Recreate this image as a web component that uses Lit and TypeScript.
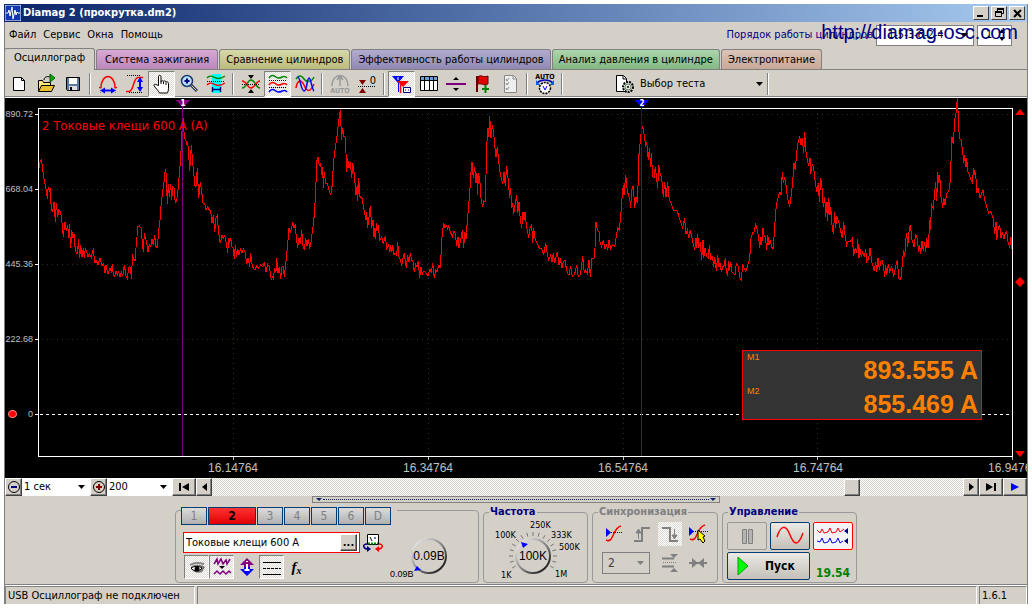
import { LitElement, html, svg, css } from "lit";
import { customElement, state } from "lit/decorators.js";
import { classMap } from "lit/directives/class-map.js";

// Current trace, x and y in thirds of a plot unit.
const TRACE = `117,218 120,200 124,196 127,212 130,240 133,255 136,270 139,285 142,312 145,275 148,290 151,278 154,345 158,350 162,322 166,380 169,325 173,365 176,345 182,352 186,385 190,425 195,380 199,408 203,390 206,428 208,388 212,460 215,405 219,430 222,418 226,465 229,475 233,475 235,432 239,488 242,450 246,485 250,460 253,488 256,460 260,470 264,485 268,475 274,488 280,460 284,505 288,495 294,510 300,488 306,512 311,506 315,535 318,510 324,538 330,520 334,528 337,508 340,540 344,545 348,528 352,540 356,530 360,545 364,530 368,542 373,510 378,542 382,550 387,515 390,515 395,552 397,478 400,490 405,498 408,458 411,425 413,395 418,392 423,400 427,440 430,470 433,415 437,432 440,445 444,470 448,450 452,455 456,432 460,450 464,420 468,455 472,458 476,405 480,375 484,320 488,290 492,260 496,222 499,240 502,328 505,268 508,305 512,268 515,315 518,275 522,280 526,325 530,315 534,285 538,240 542,185 545,130 548,60 551,90 553,130 557,133 560,150 563,140 566,180 569,228 574,150 578,205 581,230 584,270 588,275 592,220 596,310 601,262 605,290 609,325 614,325 618,345 623,335 628,345 632,348 636,385 640,360 644,412 648,370 652,362 656,415 661,445 666,420 670,430 674,422 680,450 683,475 686,428 689,440 692,430 696,455 700,460 703,492 706,450 710,485 713,462 717,480 722,462 726,475 730,462 735,470 740,508 744,490 749,515 752,475 756,508 760,520 765,525 770,512 775,520 782,510 788,515 793,500 798,530 803,508 808,515 814,555 817,545 820,550 824,520 828,530 830,488 834,535 838,515 842,552 846,515 850,515 853,545 858,498 862,460 867,400 871,412 875,398 878,380 882,400 886,388 889,430 893,458 897,430 901,448 905,405 909,452 913,465 917,430 921,452 925,432 929,462 933,440 937,410 941,380 944,340 947,290 950,200 954,185 958,212 962,205 965,240 968,215 970,280 973,230 977,265 982,265 987,285 991,298 995,290 998,240 1002,190 1006,160 1010,130 1015,90 1020,50
|2,48 4,135 8,98 12,125 15,125 18,175 20,230 23,190 27,220 31,200 35,250 38,205 42,230 45,265 48,300 52,270 53,318 56,250 60,305 66,310 72,345 78,375 80,350 83,400 87,365 91,332 95,400 99,375 102,425 105,400 107,432 109,385 112,405 115,390 119,435 125,425 130,448 136,422 140,460 146,450 150,470 152,450 156,470 158,450 162,480 166,475 170,480 173,442 177,485 181,495 185,512 189,490 193,475 196,500 199,520 203,480 207,500 211,475 215,495 219,500 223,532 227,508 231,515 235,497 239,550 243,515 247,540 250,528 256,532 264,542 270,522 274,535 278,505 283,550 287,525 291,530 297,510 301,520 304,465 307,412 311,385 315,400 319,392 323,402 326,392 331,410 337,425 342,408 346,415 350,452 354,425 357,460 362,435 367,405 371,460 374,410 378,432 382,380 386,330 389,295 392,240 396,202 400,250 404,215 408,265 411,235 412,300 416,235 420,265 424,320 428,335 431,318 436,320 438,240 440,150 444,100 446,125 449,62 453,130 457,90 461,115 465,160 468,185 472,155 476,200 480,230 484,250 488,268 492,232 496,272 500,212 504,250 509,310 512,280 515,340 518,325 521,358 526,325 530,300 533,355 537,322 541,375 545,400 549,350 552,375 555,350 559,390 566,428 570,400 575,390 578,445 581,400 586,435 592,445 598,460 605,462 611,478 617,445 621,472 626,495 632,480 636,500 640,475 644,505 648,485 652,470 657,510 661,490 666,520 670,500 675,495 679,520 683,535 687,540 692,512 697,545 702,540 706,530 710,510 715,545 721,540 725,510 728,482 733,535 737,525 742,535 747,495 751,545 756,490 762,490 765,458 768,382 772,405 777,412 780,440 785,455 790,435 795,462 800,450 803,465 807,435 812,460 818,450 824,455 829,425 833,400 838,405 842,365 846,310 850,270 852,300 857,240 861,280 865,300 869,310 872,338 875,285 880,272 884,340 888,305 892,325 895,250 898,150 902,145 904,90 908,95 914,130 917,155 920,140 925,195 928,160 932,215 934,175 938,245 942,248 946,215 950,250 953,280 956,210 960,235 965,250 970,305 974,260 978,305 983,262 988,315 994,325 1000,345 1005,345 1012,348 1018,370
|2,380 8,398 14,370 17,418 22,405 26,430 31,405 36,430 44,465 48,430 50,460 53,418 56,455 61,445 65,495 69,435 71,490 75,458 80,485 85,490 88,450 92,495 97,482 101,515 104,485 109,527 113,480 117,515 120,505 124,532 128,515 132,512 136,490 139,530 143,542 146,497 149,525 152,500 156,530 160,535 165,540 169,505 175,515 180,550 184,555 188,508 192,520 197,530 202,515 209,490 213,430 218,412 222,412 227,385 232,405 236,430 239,458 243,425 245,450 249,400 253,425 256,425 260,465 263,420 267,450 271,435 275,458 280,460 284,395 287,350 291,320 296,300 300,290 303,300 307,230 310,265 314,245 318,270 322,305 325,320 329,335 334,300 338,260 342,205 346,225 350,170 354,145 359,122 363,150 367,128 371,175 374,112 378,170 382,195 386,212 390,188 392,238 397,208 401,220 405,255 410,292 415,265 418,320 422,248 426,280 430,335 434,305 437,365 441,320 443,378 446,310 450,360 452,335 456,390 460,418 464,352 467,398 470,362 476,380 482,408 487,430 491,380 495,420 500,450 505,440 510,440 517,430 521,482 526,458 530,475 533,432 537,490 539,455 544,485 548,470 553,485 557,462 560,500 566,490 570,460 575,500 583,527 587,500 590,530 594,490 598,525 602,500 606,495 610,510 614,545 617,510 620,540 625,508 629,530 635,515 641,545 646,520 652,495 656,550 660,555 664,545 668,490 671,465 674,485 678,430 680,415 683,455 687,410 691,390 696,435 702,455 707,418 711,430 716,470 719,450 722,478 726,438 730,468 734,440 737,470 740,430 745,460 749,375 751,405 755,330 760,340 764,290 767,262 770,318 773,230 776,265 779,240 783,305 788,338 791,308 795,330 800,295 806,290 810,265 813,200 816,125 820,148 824,75 828,55 832,10 835,65 838,130 843,135 848,170 851,205 854,180 858,215 860,190 864,230 868,240 873,255 877,262 881,220 885,240 887,230 890,295 894,280 900,310 905,295 909,285 914,315 920,335 926,355 933,350 940,370 944,418 948,380 950,435 955,400 959,390 963,430 967,410 972,432 976,415 980,410 984,440 989,458 993,425 995,462`;

const POINTS = TRACE.split("|")
  .map((part, i) =>
    part
      .trim()
      .split(/\s+/)
      .map((pair) => {
        const [x, y] = pair.split(",").map(Number);
        return `${((x + i * 1020) / 3 - 38).toFixed(1)},${(y / 3 - 3).toFixed(1)}`;
      })
      .join(" ")
  )
  .join(" ");

const Y_LABELS = ["890.72", "668.04", "445.36", "222.68", "0"];
const X_LABELS = ["16.14764", "16.34764", "16.54764", "16.74764", "16.94764"];
const MENU = ["Файл", "Сервис", "Окна", "Помощь"];
const CHANNELS = ["1", "2", "3", "4", "5", "6", "D"];
const TABS = [
  { text: "Осциллограф", kind: "scope" },
  { text: "Система зажигания", kind: "ignition" },
  { text: "Сравнение цилиндров", kind: "compare" },
  { text: "Эффективность работы цилиндров", kind: "power" },
  { text: "Анализ давления в цилиндре", kind: "pressure" },
  { text: "Электропитание", kind: "supply" },
];

const icon = (body: unknown, w = 22, h = 22) =>
  html`<svg class="ico" width=${w} height=${h} viewBox="0 0 ${w} ${h}" aria-hidden="true">${body}</svg>`;

const ICONS: Record<string, unknown> = {
  new: icon(svg`<path d="M5.500 4.500h8l3 3v10h-11z" fill="#fff" stroke="#000"/><path d="M13.500 4.500v3h3" fill="none" stroke="#000"/>`),
  open: icon(svg`<path d="M3.500 18.500v-11h4l1 2h7v3" fill="#ffe87a" stroke="#000"/><path d="M3.500 18.500l3-6h13l-3 6z" fill="#e8c030" stroke="#000"/><path d="M9 7c0-3 3-4 6-3" fill="none" stroke="#000"/><path d="M15 1v8l5-4z" fill="#00b000" stroke="#006000"/>`),
  save: icon(svg`<path d="M4.500 4.500h13v13h-12l-1-1z" fill="#5a78a0" stroke="#000"/><path d="M7 5h8v6h-8z" fill="#fff"/><path d="M7 13h8v4h-8z" fill="#ddd"/><path d="M8 14h2v3h-2z" fill="#000"/>`),
  span: icon(svg`<path d="M2 14.500h2c0-6 3-11 7-11s7 5 7 11h2" fill="none" stroke="#f00" stroke-width="1.500"/><path d="M3.500 11v9M18.500 11v9" stroke="#888" stroke-dasharray="1 1"/><path d="M5 17.500h12" stroke="#00f" stroke-width="2"/><path d="M3 17.500l5-3v6zM19 17.500l-5-3v6z" fill="#00f"/>`),
  slope: icon(svg`<path d="M2 18.500h3c5 0 4-14 9-14h5" fill="none" stroke="#f00" stroke-width="1.500"/><path d="M3 2.500h14M5 19.500h14" stroke="#000" stroke-dasharray="1 1"/><path d="M16 7v10" stroke="#00f" stroke-width="2"/><path d="M16 4l3 5h-6zM16 19l3-5h-6z" fill="#00f"/>`),
  hand: icon(svg`<path d="M7.500 12.500v-9c0-1.500 2.500-1.500 2.500 0v5c0-1 2.500-1 2.500 0 0-1 2.500-1 2.500 1 0-1 2.500-1 2.500 1v5c0 2-1 4-1 4.500h-8c0-1-5-6-5.500-7.500s2-1.500 4 0z" fill="#fff" stroke="#000"/><path d="M10 8v3M12.500 9v2M15 10v2" stroke="#000"/>`),
  zoom: icon(svg`<circle cx="9" cy="8" r="5.500" fill="#b8e0ff" stroke="#203870" stroke-width="1.500"/><path d="M6.500 8h5M9 5.500v5" stroke="#000080" stroke-width="2"/><path d="M13 12l6 6" stroke="#203870" stroke-width="3"/><path d="M13.500 12.500l5 5" stroke="#f0d060"/>`),
  cursor: icon(svg`<path d="M7 1h9v19h-9z" fill="#0ff"/><path d="M2 5c3-4 6-1 9 0s6 0 9-2" fill="none" stroke="#0a8000" stroke-width="1.500"/><path d="M2 8.500h18" stroke="#000" stroke-dasharray="1 1"/><path d="M2 12c3-4 6-1 9 0s6 0 9-2" fill="none" stroke="#f00" stroke-width="1.500"/><path d="M7.500 14v5M15.500 14v5M8 16.500h7" stroke="#000080" stroke-width="1.500"/>`),
  center: icon(svg`<path d="M2 15c5 0 5-8 9-8s5 8 9 8" fill="none" stroke="#080" stroke-width="1.500"/><path d="M2 8c5 0 5 7 9 7s5-7 9-7" fill="none" stroke="#f00" stroke-width="1.500"/><path d="M2 11.500h18" stroke="#000" stroke-dasharray="1 1"/><path d="M8 2h6l-3 4zM8 20h6l-3-4z" fill="#000"/>`),
  stack: icon(svg`<path d="M2 5c3-5 6-1 9 0s6-4 9 0" fill="none" stroke="#080" stroke-width="1.500"/><path d="M2 12c3-5 6-1 9 0s6-4 9 0" fill="none" stroke="#f00" stroke-width="1.500"/><path d="M2 19c3-5 6-1 9 0s6-4 9 0" fill="none" stroke="#00f" stroke-width="1.500"/><path d="M2 7.500h18M2 14.500h18" stroke="#000" stroke-dasharray="1 1"/>`),
  overlay: icon(svg`<path d="M2 6c3-5 6-3 8 0s7 4 10-2" fill="none" stroke="#080" stroke-width="1.500"/><path d="M2 15c1-7 5-10 8-3s6 8 10-1" fill="none" stroke="#f00" stroke-width="1.500"/><path d="M4 4c2 0 3 14 6 14s3-13 5-13 3 12 5 13" fill="none" stroke="#00f" stroke-width="1.500"/>`),
  auto: icon(svg`<path d="M3 13c0-14 16-14 16 0M11 4v9M8 7l3-4 3 4" fill="none" stroke="#999" stroke-width="1.500"/><text x="11" y="20" font-size="7" font-weight="bold" text-anchor="middle" fill="#999">AUTO</text>`),
  zero: icon(svg`<path d="M2 13.500h18" stroke="#000" stroke-dasharray="1 1"/><path d="M3 7h7l-3.500 5zM3 20h7l-3.500-5z" fill="#800000"/><text x="17" y="11" font-size="11" text-anchor="middle">0</text>`),
  markers: icon(svg`<path d="M1 3h12l-6 7z" fill="#00f"/><path d="M7.500 4v15" stroke="#00f"/><path d="M6 8h12l-6 6z" fill="#f00"/><path d="M9.500 10v10" stroke="#f00" stroke-width="1.500"/><path d="M12.500 14.500h7v5h-7z" fill="#fff" stroke="#000080"/><path d="M14 17h1M17 17h1" stroke="#000080"/><path d="M7 4v3" stroke="#fff"/>`),
  table: icon(svg`<path d="M2.500 3.500h17v14h-17z" fill="#fff" stroke="#000"/><path d="M3 4h16v3h-16z" fill="#6aa0d8"/><path d="M2 7.500h18M6.500 4v14M11.500 4v14M15.500 4v14" stroke="#000"/>`),
  split: icon(svg`<path d="M1 11h20" stroke="#800080" stroke-width="2"/><path d="M8 7h6l-3-3zM8 15h6l-3 3z" fill="#000"/>`),
  flag: icon(svg`<path d="M5 3v16" stroke="#600" stroke-width="2"/><path d="M6 4c3-3 5 1 10-1v8c-5 2-6-1-10 0z" fill="#e00000" stroke="#600"/><path d="M10 16h7M13.500 12v8" stroke="#008000" stroke-width="2"/>`),
  checklist: icon(svg`<path d="M5.500 2.500h9l3 3v14h-12z" fill="#eee" stroke="#888"/><path d="M14 3v3h3M7 6l1 2 2-3M7 10l1 2 2-3M7 15l1 2 2-3" fill="none" stroke="#888"/>`),
  volt: icon(svg`<text x="11" y="6" font-size="7" font-weight="bold" text-anchor="middle">AUTO</text><path d="M3 10c4-4 12-4 16 0" fill="none" stroke="#0000c0" stroke-width="1.500"/><path d="M2 7v5h4zM20 7v5h-4z" fill="#0060e0"/><circle cx="11" cy="15" r="5.500" fill="#fff" stroke="#000" stroke-width="1.500" stroke-dasharray="2 1"/><path d="M9 13l2 4 2-4" fill="none" stroke="#00f"/>`),
  gear: icon(svg`<path d="M2.500 2.500h7l3 3v13h-10z" fill="#fff" stroke="#000"/><path d="M9 3v3h3" fill="none" stroke="#000"/><circle cx="14" cy="14" r="5" fill="#dce8dc" stroke="#000" stroke-width="2" stroke-dasharray="2 1"/><circle cx="14" cy="14" r="3" fill="none" stroke="#687868"/><circle cx="14" cy="14" r="1" fill="#000"/>`),
  eye: icon(svg`<path d="M5 11c3-3 10-3 14 0l-3 5c-4 2-8 0-11-3z" fill="#777"/><path d="M5 12c3-2 8-2 11 0-3 4-8 4-11 0z" fill="#fff" stroke="#000"/><circle cx="11" cy="13" r="2.500" fill="#000"/><path d="M4 9c5-3 10-2 14-1" fill="none" stroke="#888" stroke-width="2"/>`),
  noise: icon(svg`<path d="M3 8l3-5 1 5 3-5 2 5 3-4 1 4 3-5" fill="none" stroke="#800080" stroke-width="1.500"/><path d="M8 10h6l-3 3z" fill="#000"/><path d="M3 18l3-3 3 3 3-3 3 3 3-3 2 2" fill="none" stroke="#800080" stroke-width="1.500"/>`),
  updown: icon(svg`<path d="M11 2l7 7h-4v2h-6v-2h-4z" fill="#800080"/><path d="M11 20l7-7h-4v-2h-6v2h-4z" fill="#00f"/><path d="M11 8v6M8.500 14h5" stroke="#fff" stroke-width="2"/><path d="M11 5v1" stroke="#fff" stroke-width="2"/>`),
  lines: icon(svg`<path d="M2 6.500h18M2 18.500h18" stroke="#000"/><path d="M2 12.500h18" stroke="#000" stroke-dasharray="3 1"/>`),
  probe: icon(svg`<path d="M4.500 1.500h11v10h-11z" fill="#fff" stroke="#000"/><path d="M5 10.500h10" stroke="#080" stroke-width="2" stroke-dasharray="2 1"/><path d="M9 8l-2-4M12 4v2" stroke="#000"/><path d="M4 11c-5 0-4 5 1 5" fill="none" stroke="#000080" stroke-width="1.500"/><path d="M16 11c5 0 4 5-1 5" fill="none" stroke="#f00" stroke-width="1.500"/><path d="M4 13l4 3-4 3z" fill="#000080"/><path d="M16 13l-4 3 4 3z" fill="#f00"/>`, 20, 20),
  trigger: icon(svg`<path d="M3 17c8 4 6-12 15-14" fill="none" stroke="#f00" stroke-width="1.500"/><path d="M6 9.500h13" stroke="#0000a0" stroke-dasharray="1 1"/><path d="M3 5v9l5-4.500z" fill="#00f"/>`),
  rise: icon(svg`<path d="M3 18h8v-13h8" fill="none" stroke="#808080" stroke-width="2"/><path d="M7.500 8v8M5 10l2.500-4 2.500 4z" fill="#808080" stroke="#808080"/>`),
  fall: icon(svg`<path d="M3 5h8v13h8" fill="none" stroke="#808080" stroke-width="2"/><path d="M15.500 6v8M13 12l2.500 4 2.500-4z" fill="#808080" stroke="#808080"/>`),
  pick: icon(svg`<path d="M3 16c8 4 6-12 15-14" fill="none" stroke="#f00" stroke-width="1.500"/><path d="M6 8.500h15" stroke="#0000a0" stroke-dasharray="1 1"/><path d="M2 4v9l5-4.500z" fill="#00f"/><path d="M11 7l7 6-2 1 2 4-2 2-3-4-2 1z" fill="#ff0" stroke="#000"/>`),
  level: icon(svg`<path d="M3 6.500h12M3 14.500h12" stroke="#808080" stroke-width="2"/><path d="M4 10.500h14" stroke="#808080" stroke-dasharray="1 1"/><path d="M11 2h8l-4 4zM11 20h8l-4-4z" fill="#808080"/>`),
  squeeze: icon(svg`<path d="M2 11h18" stroke="#808080" stroke-width="2"/><path d="M5 6l6 5-6 5zM17 6l-6 5 6 5z" fill="#808080"/>`),
  pause: icon(svg`<path d="M6.500 4.500h4v14h-4zM12.500 4.500h4v14h-4z" fill="#b4b4b4" stroke="#808080"/>`),
  sine: icon(svg`<path d="M2 12c4-13 9-12 13-2s8 12 13-2" fill="none" stroke="#f00" stroke-width="1.500"/>`, 30, 22),
  multi: icon(svg`<path d="M1 5l3 3 2-4 2 4 4-1 2-4 2 5 4-1 2-4 2 4 4-3" fill="none" stroke="#f00"/><path d="M1 16l3 1 2-4 2 5 4-1 2-4 2 5 4-1 2-4 2 5 3-2" fill="none" stroke="#00f"/><path d="M32 3v6l-4-3zM32 13v6l-4-3z" fill="#000080"/>`, 34, 22),
  play: icon(svg`<path d="M4 2l10 9-10 9z" fill="#0f0" stroke="#00a000"/>`),
  caret: icon(svg`<path d="M1 2h7l-3.500 4z" fill="currentColor"/>`, 9, 8),
  minus: icon(svg`<circle cx="7" cy="7" r="5.500" fill="#d4d0c8" stroke="#000"/><path d="M4 7h6" stroke="#000080" stroke-width="2"/>`, 14, 14),
  plus: icon(svg`<circle cx="7" cy="7" r="5.500" fill="#d4d0c8" stroke="#000"/><path d="M4 7h6M7 4v6" stroke="#800000" stroke-width="2"/>`, 14, 14),
  first: icon(svg`<path d="M2 2h2v8h-2zM12 2v8l-7-4z" fill="#000"/>`, 14, 12),
  prev: icon(svg`<path d="M7 2v8l-5-4z" fill="#000"/>`, 9, 12),
  next: icon(svg`<path d="M2 2v8l5-4z" fill="#000"/>`, 9, 12),
  last: icon(svg`<path d="M2 2v8l7-4zM10 2h2v8h-2z" fill="#000"/>`, 14, 12),
  run: icon(svg`<path d="M3 2v8l8-4z" fill="#00f"/>`, 14, 12),
};

const TOOLS: Array<Array<[string, string, boolean?]>> = [
  [["new", "Новый"], ["open", "Открыть"], ["save", "Сохранить"]],
  [["span", "Период"], ["slope", "Размах"], ["hand", "Прокрутка", true], ["zoom", "Масштаб"], ["cursor", "Окно"]],
  [["center", "К центру"], ["stack", "Раздельно", true], ["overlay", "Вместе"]],
  [["auto", "Авто"], ["zero", "Ноль"]],
  [["markers", "Маркеры", true], ["table", "Таблица"], ["split", "Раздел"], ["flag", "Флаг"], ["checklist", "Список"]],
  [["volt", "Авто В"]],
];

@customElement("app-root")
export class AppRoot extends LitElement {
  @state() private tab = 0;
  @state() private channel = 1;

  static styles = css`
    :host {
      display: block;
      min-height: 100vh;
      box-sizing: border-box;
      padding: 4px;
      background: #fff;
      color: #000;
      font: 11px/14px "DejaVu Sans Condensed", "DejaVu Sans", sans-serif;
      overflow: hidden;
    }
    *, *::before, *::after { box-sizing: border-box; }
    button, input, select { font: inherit; color: inherit; margin: 0; padding: 0; border: 0; border-radius: 0; background: none; }
    select { appearance: none; width: 100%; height: 100%; padding-left: 2px; outline: 0; }
    .ico { display: block; flex: none; }
    .window { display: flex; flex-direction: column; background: #d4d0c8; border-left: 1px solid #808080; border-right: 1px solid #808080; }
    .title { display: flex; align-items: center; height: 18px; margin-left: -1px; padding: 0 2px 0 1px; gap: 2px; background: linear-gradient(90deg, #0a246a, #a6caf0); color: #fff; font-weight: bold; }
    .title h1 { flex: 1; margin: 0; font: inherit; }
    .caption { display: grid; place-items: center; width: 16px; height: 14px; background: #d4d0c8; border: 1px solid; border-color: #fff #404040 #404040 #fff; }
    .menu { position: relative; display: flex; align-items: center; height: 26px; padding: 0 15px 0 4px; gap: 7px; }
    .order { display: flex; align-items: center; gap: 3px; margin-left: auto; color: #000080; }
    .combo { display: grid; grid-template-columns: 1fr auto; align-items: center; background: #fff; color: #000; }
    .combo select, .combo .ico { grid-row: 1; }
    .combo select { grid-column: 1 / 3; }
    .combo .ico { grid-column: 2; margin-right: 4px; pointer-events: none; z-index: 1; }
    .firing { width: 98px; height: 21px; border: 1px solid #808080; }
    .firing select { padding-left: 11px; }
    .turn { display: flex; align-items: center; width: 35px; height: 21px; border: 1px solid #808080; background: #fff; color: #000; }
    .turn input { width: 20px; padding-left: 8px; }
    .site { position: absolute; right: 9px; top: -1px; font: 20px/22px "Liberation Sans", Arial, sans-serif; color: #000080; text-decoration: none; }
    .tabs { display: flex; align-items: flex-end; height: 22px; gap: 1px; margin-left: -1px; border-bottom: 1px solid #808080; }
    .tab { height: 20px; padding: 0 6px; border: 1px solid #808080; border-bottom: 0; border-radius: 3px 3px 0 0; white-space: nowrap; }
    .tab.on { height: 22px; margin-bottom: -1px; padding: 0 9px 3px; }
    .scope { background: #d4d0c8; }
    .ignition { background: linear-gradient(#d8a8d6, #bb88b9); padding: 0 8px; }
    .compare { background: linear-gradient(#d6d8a8, #bcbc7c); }
    .power { background: linear-gradient(#b2acd0, #9088b4); }
    .pressure { background: linear-gradient(#acd6ac, #84b884); }
    .supply { background: linear-gradient(#dcc4b8, #c8a898); }
    .toolbar { display: flex; align-items: center; height: 28px; border-bottom: 1px solid #fff; box-shadow: inset 0 -1px #808080; }
    .tool { display: grid; place-items: center; width: 27px; height: 26px; }
    .pressed { border: 1px solid; border-color: #808080 #fff #fff #808080; background: repeating-conic-gradient(#fff 0 25%, #dcd9d3 0 50%) 0 0 / 2px 2px; }
    .sep { width: 2px; height: 22px; margin: 0 3px; border-left: 1px solid #808080; border-right: 1px solid #fff; }
    .test { display: flex; align-items: center; gap: 4px; width: 150px; margin-left: 48px; }
    .test .label { flex: 1; text-align: left; }
    .scopeview { position: relative; display: grid; grid-template-columns: 33px 1fr 14px; grid-template-rows: 362px 18px; background: #000; color: #c0c0c0; overflow: hidden; }
    .yaxis { display: grid; grid-auto-rows: 75px; align-items: center; justify-items: end; height: 340px; margin-top: -22px; padding-right: 5px; font: 9px/14px "Liberation Sans", sans-serif; }
    .plot { display: block; width: 100%; height: 362px; overflow: visible; shape-rendering: crispEdges; }
    .side { width: 14px; height: 362px; }
    .xaxis { grid-column: 2; display: grid; grid-template-columns: repeat(5, 1fr); justify-items: center; margin: 0 -10% 0 10%; font: 12px/16px "Liberation Sans", sans-serif; }
    .name { position: absolute; left: 37px; top: 20px; color: #f00; font-size: 13px; line-height: 16px; }
    .zero { position: absolute; left: 3px; top: 312px; width: 9px; height: 8px; border-radius: 4px; background: #f00; border: 1px solid #f88; }
    .readout { position: absolute; right: 45px; top: 252px; width: 240px; margin: 0; display: grid; grid-template-columns: 1fr auto; grid-auto-rows: 34px; padding: 0 3px 0 4px; background: #333; border: 1px solid #f00; color: #ff8000; }
    .readout dt { font: 9px/12px "Liberation Sans", sans-serif; }
    .readout dd { margin: 0; font: bold 25px/38px "Liberation Sans", Arial, sans-serif; }
    .scrollrow { display: flex; height: 18px; background: #fff; }
    .btn { display: grid; place-items: center; background: #d4d0c8; border: 1px solid; border-color: #fff #404040 #404040 #fff; box-shadow: inset -1px -1px #808080; }
    .w16 { width: 16px; } .w17 { width: 17px; } .w24 { width: 24px; }
    .time { width: 68px; } .rate { width: 65px; }
    .track { flex: 1; min-width: 40px; height: 18px; appearance: none; outline: 0; background: repeating-conic-gradient(#fff 0 25%, #d4d0c8 0 50%) 0 0 / 2px 2px; }
    .track::-webkit-slider-thumb { appearance: none; width: 16px; height: 17px; background: #d4d0c8; border: 1px solid; border-color: #fff #404040 #404040 #fff; box-shadow: inset -1px -1px #808080; }
    .panel { display: flex; flex-direction: column; align-items: center; height: 89px; border-bottom: 1px solid #808080; }
    .splitter { display: flex; align-items: center; justify-content: space-between; width: 408px; height: 7px; padding: 0 2px; border: 1px solid #808080; color: #0a246a; }
    .dots { flex: 1; border-top: 1px dotted #0a246a; }
    .groups { display: flex; gap: 4px; margin-top: 2px; }
    fieldset { min-width: 0; margin: 0; padding: 0; border: 1px solid #999; border-radius: 4px; }
    legend { margin-left: 5px; padding: 0 1px; font-weight: bold; line-height: 14px; color: #000080; }
    .input { width: 304px; height: 73px; margin-top: 5px; display: grid; grid-template-columns: 184px 1fr; grid-template-rows: 15px 29px 26px; padding-left: 7px; }
    .channels { grid-column: 1 / 3; justify-self: start; display: flex; gap: 1px; margin: -4px 0 0 -2px; padding-right: 6px; height: 18px; background: #d4d0c8; }
    .ch { width: 26px; height: 18px; font-size: 12px; border: 1px solid #003c74; background: linear-gradient(#dcdcdc, #b0b0b0); color: #808080; }
    .ch.on { width: 48px; background: linear-gradient(#ff3434, #e00000); color: #000; font-weight: bold; }
    .sensor { display: flex; align-items: center; gap: 3px; margin-top: 4px; }
    .sensorbox { display: flex; align-items: center; flex: none; width: 177px; height: 21px; padding: 1px 2px; border: 1px solid #f00; background: #fff; }
    .sensorbox input { flex: 1; min-width: 0; }
    .more { width: 17px; height: 17px; line-height: 8px; font-weight: bold; }
    .flags { display: flex; padding-left: 1px; }
    .flag { display: grid; place-items: center; width: 25px; height: 24px; }
    .fx { font: italic bold 15px/20px "Liberation Serif", serif; }
    .fx sub { font-size: 10px; line-height: 8px; vertical-align: -2px; }
    .knobcell { grid-column: 2; grid-row: 2 / 4; justify-self: end; }
    .freq { width: 105px; height: 78px; }
    .sync { width: 126px; height: 78px; }
    .sync legend { color: #808080; }
    .grid4 { display: grid; grid-template-columns: repeat(4, 28px); grid-template-rows: 28px 29px; place-items: center; padding: 1px 0 0 7px; }
    .grid4 button { display: grid; place-items: center; width: 24px; height: 24px; }
    .grid4 .pressed { border-color: transparent; }
    .grid4 .combo { grid-column: 1 / 3; width: 48px; height: 22px; margin-right: 4px; background: none; border: 1px solid #808080; color: #808080; }
    .grid4 .combo select { opacity: 1; color: #404040; padding-left: 5px; font-size: 12px; }
    .control { width: 135px; height: 78px; }
    .grid3 { display: grid; grid-template-columns: 40px 40px 40px; grid-template-rows: 28px 28px; gap: 2px 3px; padding: 3px 0 0 4px; }
    .cmd { display: flex; align-items: center; justify-content: center; border: 1px solid #003c74; border-radius: 2px; background: linear-gradient(#eceae6, #c4c0b8); font-weight: bold; font-size: 12px; }
    .cmd.off { border-color: #999; background: #d4d0c8; }
    .cmd.multi { border-color: #f00; background: #f4f4f8; }
    .cmd.start { grid-column: 1 / 3; justify-content: flex-start; gap: 9px; padding-left: 6px; }
    .time-left { align-self: end; justify-self: center; font-weight: bold; font-size: 12px; color: #008000; }
    .status { display: grid; grid-template-columns: 190px 1fr 48px; gap: 2px; height: 19px; padding-top: 1px; box-shadow: inset 0 1px #fff; }
    .status span { padding: 2px 2px 0; border: 1px solid #808080; border-right-color: #fff; border-bottom: 0; white-space: nowrap; }
    text { font-family: "DejaVu Sans Condensed", "DejaVu Sans", sans-serif; }
    .dial { font-size: 9px; font-family: "Liberation Sans", sans-serif; }
    .dialvalue { font-size: 12px; font-family: "Liberation Sans", sans-serif; }
    .markno { font-size: 8px; font-weight: bold; fill: #fff; text-anchor: middle; }
  `;

  private renderTop() {
    return html`
      <header class="title">
        <svg class="ico" width="16" height="16" viewBox="0 0 16 16" aria-hidden="true">
          <path d="M0 0h16v16h-16z" fill="#1038b0" stroke="#fff" />
          <path d="M1 8h2l1-3 1 6 2-9 1 12 2-9 1 5 1-3 1 1h2" fill="none" stroke="#fff" />
        </svg>
        <h1>Diamag 2 (прокрутка.dm2)</h1>
        <button class="caption" aria-label="Свернуть">${icon(svg`<path d="M2 8h6" stroke="#000" stroke-width="2"/>`, 12, 10)}</button>
        <button class="caption" aria-label="Восстановить">${icon(svg`<path d="M4.500 3.500v-2h6v4h-2M2.500 4.500h6v4h-6z" fill="none" stroke="#000"/><path d="M4 1h7M2 4h7" stroke="#000" stroke-width="2"/>`, 12, 10)}</button>
        <button class="caption" aria-label="Закрыть">${icon(svg`<path d="M2 1l7 7M9 1l-7 7" stroke="#000" stroke-width="2"/>`, 11, 9)}</button>
      </header>
      <nav class="menu">
        ${MENU.map((m) => html`<button>${m}</button>`)}
        <div class="order">
          <label for="order">Порядок работы цилиндров</label>
          <div class="combo firing"><select id="order"><option>1-5-3-6-2-4</option></select>${ICONS.caret}</div>
          <div class="turn"><input type="text" value="1" aria-label="Цилиндр" />${icon(svg`<path d="M1 5h6l-3-4zM1 9h6l-3 4z" fill="#000"/>`, 9, 14)}</div>
        </div>
        <a class="site" href="http://diamag-osc.com">http://diamag-osc.com</a>
      </nav>
      <div class="tabs" role="tablist">
        ${TABS.map(
          (t, i) => html`<button role="tab" aria-selected=${i === this.tab}
            class=${classMap({ tab: true, on: i === this.tab, [t.kind]: true })}
            @click=${() => (this.tab = i)}>${t.text}</button>`
        )}
      </div>
      <div class="toolbar">
        ${TOOLS.map(
          (group) => html`${group.map(
              ([name, label, on]) => html`<button class=${classMap({ tool: true, pressed: !!on })} aria-label=${label}>${ICONS[name]}</button>`
            )}<span class="sep"></span>`
        )}
        <button class="test">${ICONS.gear}<span class="label">Выбор теста</span>${ICONS.caret}</button>
        <span class="sep"></span>
      </div>`;
  }

  private renderScope() {
    const cols = [195, 390, 585, 779];
    const rows = [16, 91, 166, 241];
    return html`
      <section class="scopeview" aria-label="Осциллограмма">
        <div class="yaxis">${Y_LABELS.map((y) => html`<span>${y}</span>`)}</div>
        <svg class="plot" viewBox="0 0 975 362" preserveAspectRatio="none">
          ${rows.map((y) => svg`<path d="M4 ${y + 0.5}h966" stroke="#303018" stroke-dasharray="1 4"/>`)}
          ${cols.map((x) => svg`<path d="M${x + 0.5} 15v343" stroke="#303018" stroke-dasharray="1 4"/>`)}
          ${[...cols, 974].map((x) => svg`<path d="M${x + 0.5} 359v3" stroke="#c0c0c0"/>`)}
          ${[...rows, 316].map((y) => svg`<path d="M-3 ${y + 0.5}h4" stroke="#fff"/>`)}
          <path d="M2 316.500h972" stroke="#fff" stroke-dasharray="3 3" />
          <path d="M.5 10.500h974v348h-974z" fill="none" stroke="#fff" />
          <path d="M603.500 8v350" stroke="#303030" />
          <polyline points=${POINTS} fill="none" stroke="#f00" />
          <path d="M144.500 8v350" stroke="#800080" />
          <path d="M603.500 8v42" stroke="#00f" />
          <path d="M137 2h15l-7 7z" fill="#800080" />
          <path d="M596 2h15l-7 7z" fill="#00f" />
          <text class="markno" x="145" y="8">1</text>
          <text class="markno" x="604" y="8">2</text>
        </svg>
        <svg class="side" viewBox="0 0 14 362" aria-hidden="true">
          <path d="M7 11l5 6h-10zM7 179l5 5-5 5-5-5zM2 353h10l-5 6z" fill="#f00" />
        </svg>
        <div class="xaxis">${X_LABELS.map((x) => html`<span>${x}</span>`)}</div>
        <span class="name">2 Токовые клещи 600 А (А)</span>
        <span class="zero"></span>
        <dl class="readout"><dt>M1</dt><dd>893.555 A</dd><dt>M2</dt><dd>855.469 A</dd></dl>
      </section>
      <div class="scrollrow">
        <button class="btn w17" aria-label="Меньше">${ICONS.minus}</button>
        <div class="combo time"><select aria-label="Время"><option>1 сек</option></select>${ICONS.caret}</div>
        <button class="btn w17" aria-label="Больше">${ICONS.plus}</button>
        <div class="combo rate"><select aria-label="Шкала"><option>200</option></select>${ICONS.caret}</div>
        <button class="btn w24" aria-label="В начало">${ICONS.first}</button>
        <button class="btn w16" aria-label="Назад">${ICONS.prev}</button>
        <input class="track" type="range" min="0" max="100" value="86" aria-label="Позиция" />
        <button class="btn w16" aria-label="Вперёд">${ICONS.next}</button>
        <button class="btn w24" aria-label="В конец">${ICONS.last}</button>
        <button class="btn w24" aria-label="Воспроизвести">${ICONS.run}</button>
      </div>`;
  }

  private knob(cx: number, cy: number, value: string) {
    return svg`
      <defs><linearGradient id="rim" x1="0" y1="0" x2="1" y2="1">
        <stop offset="0" stop-color="#fff"/><stop offset=".5" stop-color="#888"/><stop offset="1" stop-color="#000"/>
      </linearGradient></defs>
      <circle cx=${cx} cy=${cy} r="17" fill="#d4d0c8" stroke="url(#rim)" stroke-width="2"/>
      <text class="dialvalue" x=${cx} y=${cy + 4} text-anchor="middle">${value}</text>`;
  }

  private renderPanel() {
    const ticks = Array.from({ length: 17 }, (_, i) => ((i * 15 - 210) * Math.PI) / 180);
    return html`
      <section class="panel">
        <div class="splitter">${icon(svg`<path d="M1 1h6l-3 3z" fill="#0a246a"/>`, 8, 5)}<span class="dots"></span>${icon(svg`<path d="M1 1h6l-3 3z" fill="#0a246a"/>`, 8, 5)}</div>
        <div class="groups">
          <fieldset class="input" aria-label="Канал">
            <div class="channels">
              ${CHANNELS.map(
                (c, i) => html`<button class=${classMap({ ch: true, on: i === this.channel })} @click=${() => (this.channel = i)}>${c}</button>`
              )}
            </div>
            <div class="sensor">
              <div class="sensorbox"><input type="text" value="Токовые клещи 600 А" aria-label="Датчик" /><button class="btn more">...</button></div>
              <button aria-label="Щуп">${ICONS.probe}</button>
            </div>
            <div class="flags">
              <button class="flag pressed" aria-label="Показать">${ICONS.eye}</button>
              <button class="flag pressed" aria-label="Фильтр">${ICONS.noise}</button>
              <button class="flag" aria-label="Инверсия">${ICONS.updown}</button>
              <button class="flag pressed" aria-label="Уровни">${ICONS.lines}</button>
              <button class="flag fx" aria-label="Функция"><span>f<sub>x</sub></span></button>
            </div>
            <svg class="knobcell" width="92" height="54" viewBox="0 0 92 54">
              ${this.knob(43, 30, "0.09В")}
              <path d="M28 45l3-5 4 4z" fill="#00f" />
              <text class="dial" x="4" y="51">0.09В</text>
            </svg>
          </fieldset>
          <fieldset class="freq">
            <legend>Частота</legend>
            <svg class="ico" width="103" height="63" viewBox="0 0 103 63">
              ${ticks.map(
                (a) => svg`<path d="M${49 + 20 * Math.cos(a)} ${37 + 20 * Math.sin(a)}L${49 + 24 * Math.cos(a)} ${37 + 24 * Math.sin(a)}" stroke="#777"/>`
              )}
              ${this.knob(49, 37, "100K")}
              <path d="M37 23l7 2-5 4z" fill="#00f" />
              <g class="dial">
                <text x="11" y="19">100K</text><text x="46" y="9">250K</text><text x="67" y="19">333K</text>
                <text x="75" y="31">500K</text><text x="17" y="59">1K</text><text x="71" y="58">1M</text>
              </g>
            </svg>
          </fieldset>
          <fieldset class="sync">
            <legend>Синхронизация</legend>
            <div class="grid4">
              <button aria-label="Уровень">${ICONS.trigger}</button>
              <button aria-label="Фронт">${ICONS.rise}</button>
              <button class="pressed" aria-label="Спад">${ICONS.fall}</button>
              <button aria-label="Выбор уровня">${ICONS.pick}</button>
              <div class="combo"><select disabled aria-label="Канал синхронизации"><option>2</option></select>${ICONS.caret}</div>
              <button aria-label="Границы">${ICONS.level}</button>
              <button aria-label="Сжать">${ICONS.squeeze}</button>
            </div>
          </fieldset>
          <fieldset class="control">
            <legend>Управление</legend>
            <div class="grid3">
              <button class="cmd off" aria-label="Пауза">${ICONS.pause}</button>
              <button class="cmd" aria-label="Одиночный">${ICONS.sine}</button>
              <button class="cmd multi" aria-label="Непрерывный">${ICONS.multi}</button>
              <button class="cmd start">${ICONS.play}Пуск</button>
              <output class="time-left">19.54</output>
            </div>
          </fieldset>
        </div>
      </section>
      <footer class="status"><span>USB Осциллограф не подключен</span><span></span><span>1.6.1</span></footer>`;
  }

  render() {
    return html`<main class="window">${this.renderTop()}${this.renderScope()}${this.renderPanel()}</main>`;
  }
}
